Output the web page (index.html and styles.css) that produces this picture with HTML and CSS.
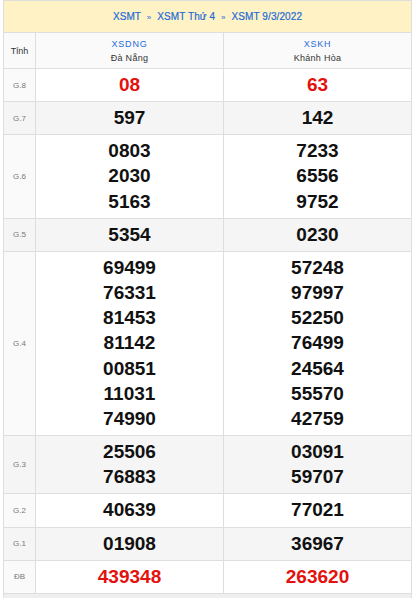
FILE: index.html
```html
<!DOCTYPE html>
<html lang="vi">
<head>
<meta charset="utf-8">
<title>XSMT 9/3/2022</title>
<link rel="stylesheet" href="styles.css">
</head>
<body>
<table class="kq">
  <colgroup><col class="c-label"><col class="c-prov"><col class="c-prov"></colgroup>
  <thead>
    <tr><th colspan="3" class="title"><a>XSMT</a> <span class="sep">»</span> <a>XSMT Thứ 4</a> <span class="sep">»</span> <a>XSMT 9/3/2022</a></th></tr>
    <tr class="prov">
      <th class="lbl tinh">Tỉnh</th>
      <th><a class="code">XSDNG</a><span class="name">Đà Nẵng</span></th>
      <th><a class="code">XSKH</a><span class="name">Khánh Hòa</span></th>
    </tr>
  </thead>
  <tbody>
    <tr><td class="lbl">G.8</td><td class="num red">08</td><td class="num red">63</td></tr>
    <tr class="alt"><td class="lbl">G.7</td><td class="num">597</td><td class="num">142</td></tr>
    <tr><td class="lbl">G.6</td><td class="num"><div>0803</div><div>2030</div><div>5163</div></td><td class="num"><div>7233</div><div>6556</div><div>9752</div></td></tr>
    <tr class="alt"><td class="lbl">G.5</td><td class="num">5354</td><td class="num">0230</td></tr>
    <tr><td class="lbl">G.4</td><td class="num"><div>69499</div><div>76331</div><div>81453</div><div>81142</div><div>00851</div><div>11031</div><div>74990</div></td><td class="num"><div>57248</div><div>97997</div><div>52250</div><div>76499</div><div>24564</div><div>55570</div><div>42759</div></td></tr>
    <tr class="alt"><td class="lbl">G.3</td><td class="num"><div>25506</div><div>76883</div></td><td class="num"><div>03091</div><div>59707</div></td></tr>
    <tr><td class="lbl">G.2</td><td class="num">40639</td><td class="num">77021</td></tr>
    <tr class="alt"><td class="lbl">G.1</td><td class="num">01908</td><td class="num">36967</td></tr>
    <tr><td class="lbl">ĐB</td><td class="num red db">439348</td><td class="num red db">263620</td></tr>
    <tr class="foot"><td colspan="3"></td></tr>
  </tbody>
</table>
</body>
</html>
```
FILE: styles.css
```css
html, body { background: #fff; }
body {
  margin: 0 0 0 3px;
  font-family: "Liberation Sans", Arial, sans-serif;
  color: #222;
}
.kq {
  width: 409px;
  border-collapse: collapse;
  table-layout: fixed;
}
.c-label { width: 32px; }
.kq th, .kq td {
  border: 1px solid #dedede;
  text-align: center;
  padding: 0;
}
.title {
  height: 31px;
  background: #fff3c6;
  font-size: 10px;
  font-weight: normal;
  color: #1d6ad8;
  letter-spacing: 0.1px;
  border-top: none;
}
.title a { color: #1d6ad8; -webkit-text-stroke: 0.2px #1d6ad8; }
.title .sep { font-size: 8px; margin: 0 3px; color: #1d6ad8; }
.prov th {
  height: 35px;
  background: #fafafa;
  font-weight: normal;
  font-size: 9px;
  line-height: 14px;
}
.prov .code { display: block; color: #1d6ad8; letter-spacing: 0.8px; }
.prov .name { display: block; color: #333; letter-spacing: 0.3px; }
.prov .tinh { font-size: 9px; color: #333; }
.lbl {
  font-size: 8px;
  color: #777;
  background: #fafafa;
}
.kq td.num {
  font-size: 19px;
  font-weight: bold;
  color: #111;
  line-height: 25.15px;
  padding: 3px 0 4px;
}
.kq td.red { color: #e3120e; }
.alt td { background: #f5f5f5; }
.foot td {
  height: 4px;
  background: #efefef;
  border-bottom: none;
}
```
